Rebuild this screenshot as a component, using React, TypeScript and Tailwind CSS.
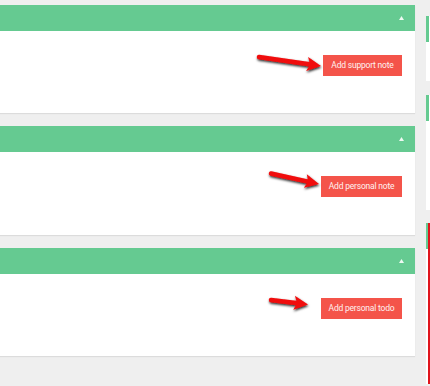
import React from 'react';

const cards = [
  { label: 'Add support note', w: 'w-[79px]', body: 'h-[82px]' },
  { label: 'Add personal note', w: 'w-[81px]', body: 'h-[83px]' },
  { label: 'Add personal todo', w: 'w-[81px]', body: 'h-[82px]' },
];

function Arrow({ tail, tip }: { tail: [number, number]; tip: [number, number] }) {
  const dx = tip[0] - tail[0];
  const dy = tip[1] - tail[1];
  const len = Math.sqrt(dx * dx + dy * dy);
  const ux = dx / len;
  const uy = dy / len;
  // arrow head base
  const bx = tip[0] - ux * 14;
  const by = tip[1] - uy * 14;
  const px = -uy * 7;
  const py = ux * 7;
  const head = `${tip[0]},${tip[1]} ${bx + px},${by + py} ${bx + 3 * ux},${by + 3 * uy} ${bx - px},${by - py}`;
  return (
    <g filter="url(#arrowShadow)">
      <line x1={tail[0]} y1={tail[1]} x2={bx + 4 * ux} y2={by + 4 * uy} stroke="#f00a0a" strokeWidth={4.5} strokeLinecap="round" />
      <polygon points={head} fill="#f00a0a" />
    </g>
  );
}

export default function App() {
  return (
    <div className="relative w-[430px] h-[386px] bg-[#efefef] flex overflow-hidden" style={{ fontFamily: 'Roboto, "Liberation Sans", sans-serif' }}>
      {/* main column */}
      <div className="w-[415px] shrink-0 flex flex-col gap-[13px] pt-[5px]">
        {cards.map((c) => (
          <div key={c.label} className="bg-white shadow-[0_1px_1px_rgba(0,0,0,0.08)]">
            <div className="h-[26px] bg-[#65ca91] flex items-center justify-end pr-[11px]">
              <svg width="5" height="4" viewBox="0 0 5 4">
                <polygon points="2.5,0 5,4 0,4" fill="#eef9f2" />
              </svg>
            </div>
            <div className={`${c.body} flex justify-end items-start pt-6 pr-[13px]`}>
              <button className={`${c.w} h-[21px] bg-[#f4544a] text-[#fff2f0] text-[8.5px] leading-none tracking-[-0.2px] flex items-center justify-center`}>
                {c.label}
              </button>
            </div>
          </div>
        ))}
      </div>

      {/* side column, mostly cut off */}
      <div className="ml-[11px] w-[20px] shrink-0 flex flex-col">
        <div className="mt-[16px] h-[65px] bg-white">
          <div className="h-[26px] w-[3px] bg-[#65ca91]" />
        </div>
        <div className="mt-[14px] h-[115px] bg-white">
          <div className="h-[26px] w-[3px] bg-[#65ca91]" />
        </div>
        <div className="mt-[13px] h-[161px] bg-white flex">
          <div className="w-[2px] h-[26px] bg-[#65ca91] shrink-0" />
          <div className="w-[2px] h-[161px] bg-[#e0141c] shrink-0" />
        </div>
      </div>

      {/* annotation arrows */}
      <svg className="absolute inset-0 pointer-events-none" width="430" height="386">
        <defs>
          <filter id="arrowShadow" x="-20%" y="-50%" width="140%" height="200%">
            <feDropShadow dx="0.5" dy="1.5" stdDeviation="0.9" floodColor="#000" floodOpacity="0.85" />
          </filter>
        </defs>
        <Arrow tail={[259, 57]} tip={[321, 66]} />
        <Arrow tail={[271, 173.5]} tip={[319, 184]} />
        <Arrow tail={[271, 300]} tip={[308, 304.5]} />
      </svg>
    </div>
  );
}
